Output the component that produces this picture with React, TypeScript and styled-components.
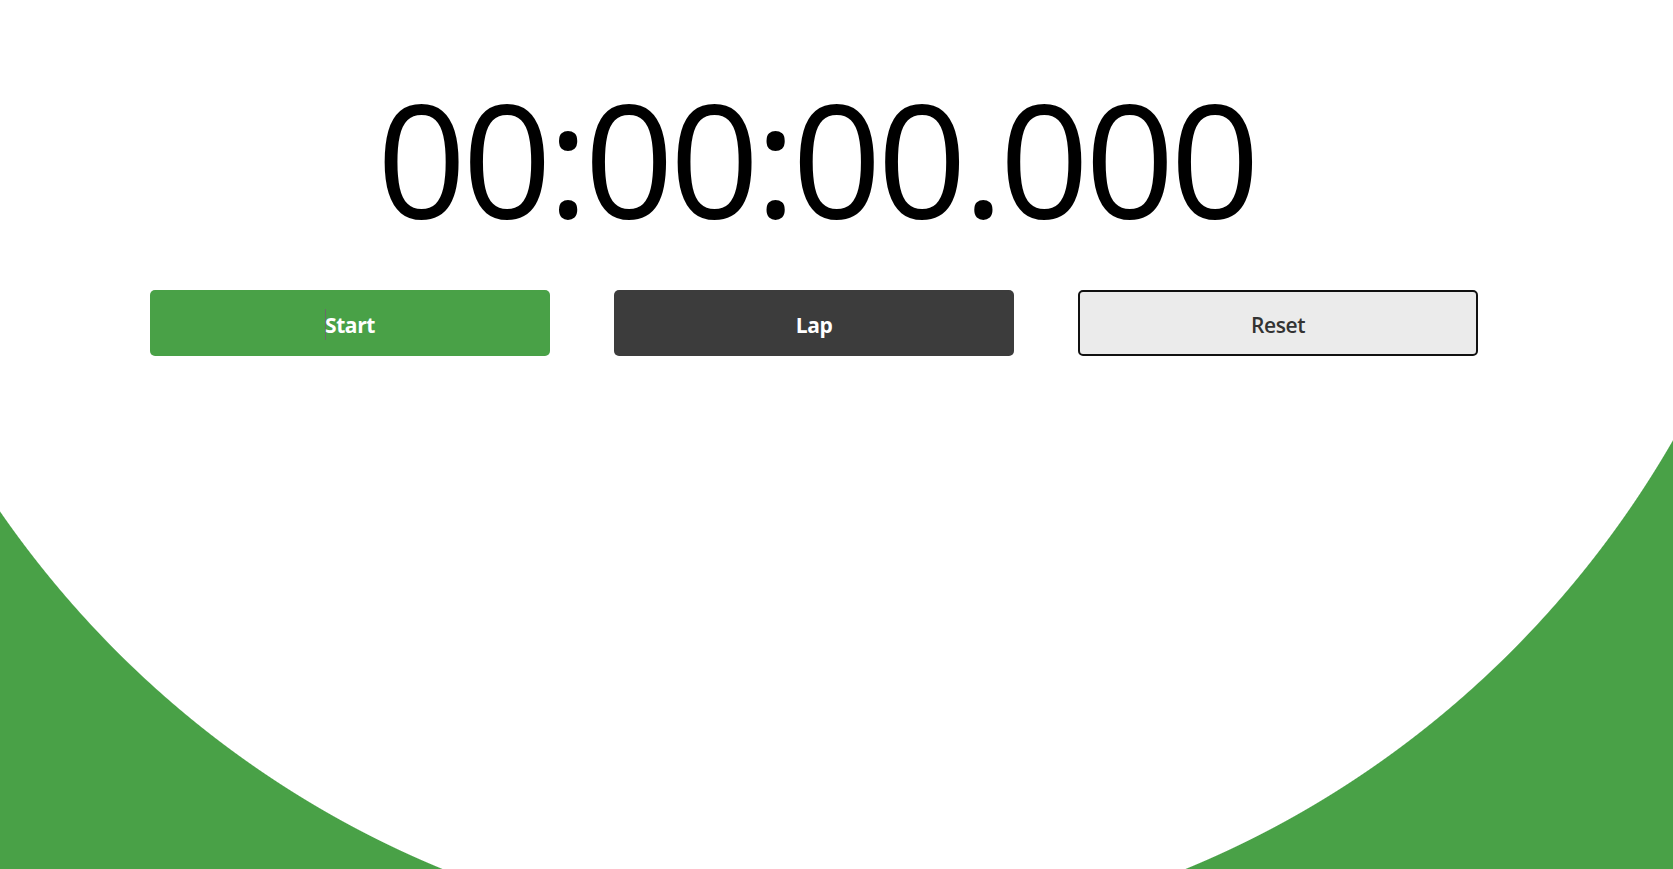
import React from "react";
import styled, { createGlobalStyle } from "styled-components";

const GREEN = "#49a147";

const GlobalStyle = createGlobalStyle`
  html, body {
    margin: 0;
    padding: 0;
    height: 100%;
    overflow: hidden;
  }
  body {
    font-family: "Open Sans", "Noto Sans", Arial, sans-serif;
    background: #ffffff;
  }
`;

const Page = styled.div`
  width: 100vw;
  height: 100vh;
  background: radial-gradient(
    998px 1022px at 814px -79px,
    #ffffff calc(100% - 1px),
    ${GREEN} 100%
  );
  display: flex;
  justify-content: flex-start;
`;

const Main = styled.main`
  width: 1628px;
  display: flex;
  flex-direction: column;
  align-items: center;
  padding-top: 79px;
  box-sizing: border-box;
`;

const TimeDisplay = styled.div`
  font-family: "Open Sans", "Noto Sans", sans-serif;
  font-size: 157px;
  line-height: 1;
  letter-spacing: -4.4px;
  color: #000;
  font-weight: 400;
  white-space: nowrap;
  margin-right: -4.4px;
`;

const ButtonRow = styled.div`
  margin-top: 54px;
  width: 1328px;
  display: grid;
  grid-template-columns: repeat(3, 1fr);
  column-gap: 64px;
`;

type Variant = "start" | "lap" | "reset";

const bg: Record<Variant, string> = {
  start: GREEN,
  lap: "#3c3c3c",
  reset: "#ebebeb",
};

const fg: Record<Variant, string> = {
  start: "#ffffff",
  lap: "#ffffff",
  reset: "#333333",
};

const Button = styled.button<{ $variant: Variant }>`
  height: 66px;
  box-sizing: border-box;
  border-radius: 5px;
  border: ${(p) => (p.$variant === "reset" ? "2px solid #111" : "none")};
  background: ${(p) => bg[p.$variant]};
  color: ${(p) => fg[p.$variant]};
  font-family: "Open Sans", "Noto Sans", sans-serif;
  font-size: 21px;
  font-weight: ${(p) => (p.$variant === "reset" ? 600 : 700)};
  letter-spacing: -0.4px;
  display: flex;
  align-items: center;
  justify-content: center;
  padding: 3px 0 0;
  cursor: pointer;
`;

const Caret = styled.span`
  display: inline-block;
  width: 1px;
  height: 31px;
  margin-right: -1px;
  background: #6a6a6a;
  align-self: center;
`;

export default function App() {
  return (
    <>
      <GlobalStyle />
      <Page>
        <Main>
          <TimeDisplay>00:00:00.000</TimeDisplay>
          <ButtonRow>
            <Button $variant="start">
              <Caret />
              Start
            </Button>
            <Button $variant="lap">Lap</Button>
            <Button $variant="reset">Reset</Button>
          </ButtonRow>
        </Main>
      </Page>
    </>
  );
}
